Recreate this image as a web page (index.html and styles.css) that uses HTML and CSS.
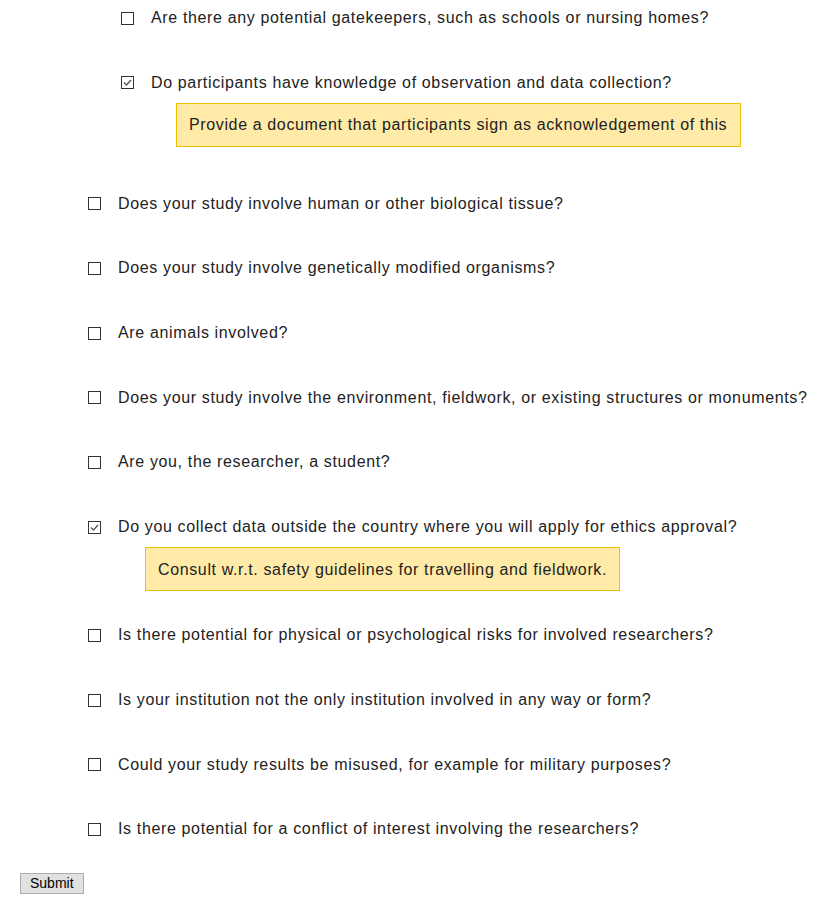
FILE: index.html
```html
<!DOCTYPE html>
<html lang="en">
<head>
<meta charset="utf-8">
<title>Ethics checklist</title>
<link rel="stylesheet" href="styles.css">
</head>
<body>
<form class="form">
  <ul class="questions">
    <li class="item item-parent">
      <ul class="questions nested">
        <li class="item">
          <label class="q-row"><span class="box"></span><span class="q-text">Are there any potential gatekeepers, such as schools or nursing homes?</span></label>
        </li>
        <li class="item">
          <label class="q-row"><span class="box checked"><svg viewBox="0 0 13 13" width="13" height="13"><polyline points="3,6.5 5.5,9 10,4" fill="none" stroke="#555" stroke-width="1.3"/></svg></span><span class="q-text">Do participants have knowledge of observation and data collection?</span></label>
          <div class="note note-nested">Provide a document that participants sign as acknowledgement of this</div>
        </li>
      </ul>
    </li>
    <li class="item">
      <label class="q-row"><span class="box"></span><span class="q-text">Does your study involve human or other biological tissue?</span></label>
    </li>
    <li class="item">
      <label class="q-row"><span class="box"></span><span class="q-text">Does your study involve genetically modified organisms?</span></label>
    </li>
    <li class="item">
      <label class="q-row"><span class="box"></span><span class="q-text">Are animals involved?</span></label>
    </li>
    <li class="item">
      <label class="q-row"><span class="box"></span><span class="q-text">Does your study involve the environment, fieldwork, or existing structures or monuments?</span></label>
    </li>
    <li class="item">
      <label class="q-row"><span class="box"></span><span class="q-text">Are you, the researcher, a student?</span></label>
    </li>
    <li class="item">
      <label class="q-row"><span class="box checked"><svg viewBox="0 0 13 13" width="13" height="13"><polyline points="3,6.5 5.5,9 10,4" fill="none" stroke="#555" stroke-width="1.3"/></svg></span><span class="q-text">Do you collect data outside the country where you will apply for ethics approval?</span></label>
      <div class="note note-outer">Consult w.r.t. safety guidelines for travelling and fieldwork.</div>
    </li>
    <li class="item">
      <label class="q-row"><span class="box"></span><span class="q-text">Is there potential for physical or psychological risks for involved researchers?</span></label>
    </li>
    <li class="item">
      <label class="q-row"><span class="box"></span><span class="q-text">Is your institution not the only institution involved in any way or form?</span></label>
    </li>
    <li class="item">
      <label class="q-row"><span class="box"></span><span class="q-text">Could your study results be misused, for example for military purposes?</span></label>
    </li>
    <li class="item">
      <label class="q-row"><span class="box"></span><span class="q-text">Is there potential for a conflict of interest involving the researchers?</span></label>
    </li>
  </ul>
  <button type="button" class="submit">Submit</button>
</form>
</body>
</html>
```

FILE: styles.css
```css
html, body {
  margin: 0;
  padding: 0;
  background: #fff;
}

body {
  font-family: "Liberation Sans", Arial, sans-serif;
  font-size: 16px;
  color: #222;
}

.form {
  display: flex;
  flex-direction: column;
  align-items: flex-start;
  padding-top: 8.6px;
}

.questions {
  list-style: none;
  margin: 0;
  padding: 0 0 0 88px;
  display: flex;
  flex-direction: column;
  gap: 34.9px;
}

.questions.nested {
  padding-left: 33px;
  margin-bottom: 12.4px;
}

.item {
  display: flex;
  flex-direction: column;
  align-items: flex-start;
}

.q-row {
  display: flex;
  align-items: center;
  line-height: 18.4px;
  padding-bottom: 11.4px;
  white-space: nowrap;
}

.q-text {
  letter-spacing: 0.64px;
  position: relative;
  top: 0.6px;
}

.box {
  width: 13px;
  height: 13px;
  box-sizing: border-box;
  border: 1px solid #333;
  background: #fff;
  margin-right: 17px;
  flex: none;
  position: relative;
  top: 0.5px;
}

.box svg {
  display: block;
  margin: -1px 0 0 -1px;
}

.note {
  background: #ffeaa7;
  border: 1px solid #f0c000;
  line-height: 18.4px;
  padding: 12.8px 12px 10.8px;
  margin-top: -0.4px;
  white-space: nowrap;
  letter-spacing: 0.63px;
}

.note-nested {
  margin-left: 55px;
  padding-right: 13px;
}

.note-outer {
  margin-left: 57px;
}

.submit {
  margin: 23.2px 0 0 20px;
  height: 21px;
  padding: 0 9px;
  font-family: "Liberation Sans", Arial, sans-serif;
  font-size: 14px;
  color: #000;
  background: #e1e1e1;
  border: 1px solid #adadad;
  border-radius: 0;
  line-height: 19px;
}
```
